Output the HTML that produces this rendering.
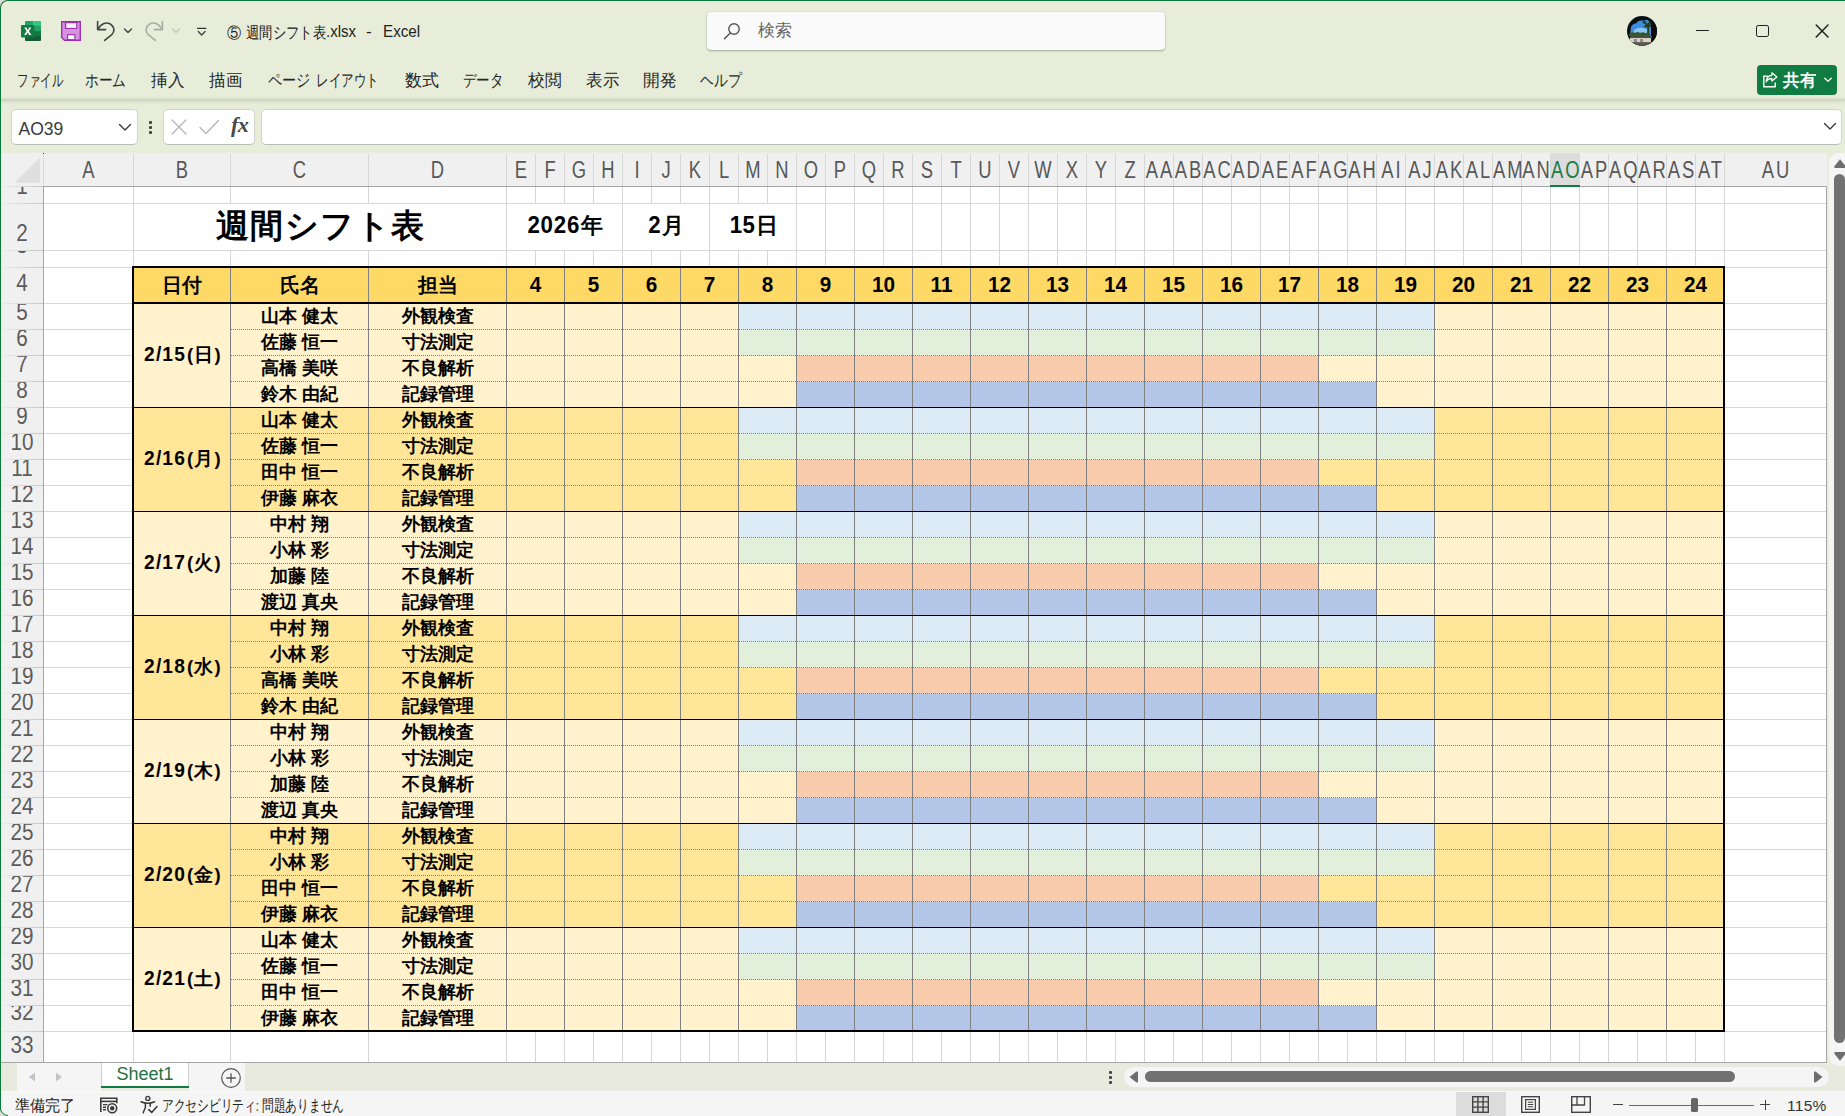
<!DOCTYPE html>
<html lang="ja"><head><meta charset="utf-8"><title>Excel</title>
<style>
html,body{margin:0;padding:0;}
body{width:1845px;height:1116px;overflow:hidden;position:relative;background:#e7edd9;font-family:"Liberation Sans",sans-serif;color:#222;}
div,span,svg{position:absolute;box-sizing:border-box;}
.t{white-space:nowrap;line-height:1;transform-origin:0 50%;}
.c{white-space:nowrap;line-height:1;text-align:center;}
.ch{white-space:nowrap;line-height:1;text-align:center;color:#585858;font-size:23px;top:159px;height:24px;transform:scaleX(.8);letter-spacing:2.5px;padding-left:2.5px;}
.rh{white-space:nowrap;line-height:1;text-align:center;color:#5c5c5c;font-size:23.5px;left:1px;width:42px;overflow:hidden;transform:scaleX(.88);}
.d{position:static;display:inline-block;font-size:1.09em;line-height:1;transform:scaleX(.95);}
.b{font-weight:bold;color:#000;white-space:nowrap;line-height:1;text-align:center;}
</style></head><body>
<div style="left:0px;top:0px;width:8px;height:8px;background:#d9ddd2;"></div>
<div style="left:0px;top:0px;width:1845px;height:1116px;background:#e7edd9;border-radius:8px 0 0 8px;"></div>
<div style="left:0px;top:0px;width:1845px;height:1116px;border-left:1px solid #0b7a3b;border-top:1px solid #0b7a3b;border-radius:8px 0 0 8px;"></div>
<svg style="left:21px;top:21px" width="20" height="20" viewBox="0 0 20 20">
<path d="M5 0h7.5v5H4V1a1 1 0 0 1 1-1z" fill="#21a366"/>
<path d="M12.5 0H19a1 1 0 0 1 1 1v4h-7.5z" fill="#33c481"/>
<rect x="4" y="5" width="8.5" height="5" fill="#107c41"/>
<rect x="12.5" y="5" width="7.5" height="5" fill="#21a366"/>
<rect x="4" y="10" width="8.5" height="5" fill="#185c37"/>
<rect x="12.5" y="10" width="7.5" height="5" fill="#107c41"/>
<path d="M4 15h16v4a1 1 0 0 1-1 1H5a1 1 0 0 1-1-1z" fill="#185c37"/>
<rect x="0" y="4" width="13.5" height="12.5" rx="1" fill="#107c41"/>
<path d="M3.3 6.6h2.2l1.3 2.6 1.4-2.6h2.1l-2.4 3.7 2.5 3.8H8.1l-1.4-2.7-1.5 2.7H3.1l2.5-3.8z" fill="#fff"/>
</svg>
<svg style="left:61px;top:21px" width="20" height="20" viewBox="0 0 20 20">
<path d="M0.700 0.700h18.600v18.600H3.500L0.700 16.500z" fill="#d592df" stroke="#9f2fb2" stroke-width="1.400"/>
<path d="M3.900 0.700v7.300h12.400V0.700z" fill="#9f2fb2"/>
<rect x="5.200" y="2.200" width="10" height="4.700" fill="#f6f0f8"/>
<path d="M6 19.300v-6.200h8.400v6.200z" fill="#9f2fb2"/>
<rect x="7.100" y="14.200" width="6.200" height="3.900" fill="#fbf8fc"/>
</svg>
<svg style="left:95px;top:19px" width="22" height="24" viewBox="0 0 22 24">
<path d="M2.6 2.6v8h8" fill="none" stroke="#444" stroke-width="1.6" stroke-linecap="round" stroke-linejoin="round"/>
<path d="M3.2 10 C6 4.5 11.5 2.6 15.6 5.2 C19.6 7.8 20 12.6 16.8 15.6 L9.6 21.4" fill="none" stroke="#444" stroke-width="1.6" stroke-linecap="round" stroke-linejoin="round"/>
</svg>
<svg style="left:123px;top:27px" width="10" height="8" viewBox="0 0 10 8"><path d="M1.5 2l3.5 3.5L8.5 2" fill="none" stroke="#444" stroke-width="1.4" stroke-linecap="round" stroke-linejoin="round"/></svg>
<svg style="left:143px;top:19px" width="22" height="24" viewBox="0 0 22 24">
<path d="M19.4 2.6v8h-8" fill="none" stroke="#a8aca0" stroke-width="1.6" stroke-linecap="round" stroke-linejoin="round"/>
<path d="M18.8 10 C16 4.5 10.5 2.6 6.4 5.2 C2.4 7.8 2 12.6 5.2 15.6 L12.4 21.4" fill="none" stroke="#a8aca0" stroke-width="1.6" stroke-linecap="round" stroke-linejoin="round"/>
</svg>
<svg style="left:171px;top:27px" width="10" height="8" viewBox="0 0 10 8"><path d="M1.5 2l3.5 3.5L8.5 2" fill="none" stroke="#c4c8bc" stroke-width="1.4" stroke-linecap="round" stroke-linejoin="round"/></svg>
<svg style="left:196px;top:26px" width="12" height="12" viewBox="0 0 12 12"><path d="M1.600 2.400h8.200" stroke="#333" stroke-width="1.400" stroke-linecap="round"/><path d="M2.300 5.600l3.400 3.300 3.400-3.300" fill="none" stroke="#444" stroke-width="1.4" stroke-linecap="round" stroke-linejoin="round"/></svg>
<span class="t" id="f1" style="left:226.8px;top:24.5px;font-size:15px;transform:scaleX(0.9467);color:#222;">⑤</span>
<span class="t" id="f2" style="left:246px;top:24.5px;font-size:15.5px;transform:scaleX(0.8333);color:#222;">週間シフト表</span>
<span class="t" id="f3" style="left:326px;top:24px;font-size:16px;transform:scaleX(0.9375);color:#222;">.xlsx</span>
<span class="t" id="f4" style="left:366.3px;top:24px;font-size:16px;transform:scaleX(1.0698);color:#222;">-</span>
<span class="t" id="f5" style="left:383.2px;top:24px;font-size:16px;transform:scaleX(0.9508);color:#222;">Excel</span>
<div style="left:707px;top:12px;width:458px;height:38px;background:#fafafa;border-radius:4px;box-shadow:0 1px 2px rgba(0,0,0,.28),0 0 0 1px rgba(0,0,0,.04);"></div>
<svg style="left:722px;top:21px" width="20" height="20" viewBox="0 0 20 20"><circle cx="12" cy="8" r="5.2" fill="none" stroke="#555" stroke-width="1.4"/><path d="M8.2 12L2.5 17.8" stroke="#555" stroke-width="1.5" stroke-linecap="round"/></svg>
<span class="t" id="f6" style="left:758px;top:22px;font-size:17px;transform:scaleX(1.0000);color:#666;">検索</span>
<svg style="left:1626px;top:15px" width="32" height="32" viewBox="0 0 32 32">
<defs><clipPath id="av"><circle cx="16" cy="16" r="15"/></clipPath></defs>
<g clip-path="url(#av)">
<rect width="32" height="32" fill="#0c1012"/>
<path d="M4 21 L5 12 Q7 8 10 8.500 Q12 5 16 5.500 L22 5 Q25 8 25 14 L25 21z" fill="#3a8ee0"/>
<path d="M7 21 L8 15 Q12 12 17 13 L23 15 L24 21z" fill="#8cc4f2"/>
<path d="M17 5 q3 1 4 4 q2 -3 5 -2 q-2 1 -2.500 3 q2 0 3 2 q-2 -.5 -3.500 .5 l.5 9 h-2.500 l.3 -9 q-2 -1 -4 .5 q.5 -2.500 2.500 -3 q-1.500 -2 -3.300 -2z" fill="#243d1c"/>
<path d="M3 19 q3 -3 6 -1 q3 -2 5 0 q3 -1.500 5 0 l5 0 v3 H3z" fill="#35582a"/>
<rect x="4" y="21" width="22" height="2" fill="#4a4f44"/>
<rect x="4" y="23" width="21" height="4.500" fill="#d6d2c6"/>
<rect x="8" y="24" width="3" height="3" fill="#7a8fa6"/><rect x="14" y="24" width="3" height="3" fill="#a08a70"/>
<path d="M2 27.500h24v4H2z" fill="#5a584c"/>
<path d="M25 3 h8 v28 h-7 q1 -10 -1 -18z" fill="#0a0d0c"/>
</g></svg>
<div style="left:1696px;top:29.5px;width:12.5px;height:1.5px;background:#1f1f1f;border-radius:.7px;"></div>
<div style="left:1755.5px;top:24.5px;width:13px;height:12.7px;border:1.500px solid #1f1f1f;border-radius:2.200px;"></div>
<svg style="left:1814px;top:23px" width="16" height="16" viewBox="0 0 16 16"><path d="M2.200 2l11.800 12M14 2L2.200 14" stroke="#1f1f1f" stroke-width="1.500" stroke-linecap="round"/></svg>
<span class="t" id="f7" style="left:16.5px;top:72px;font-size:17px;transform:scaleX(0.6765);color:#262626;">ファイル</span>
<span class="t" id="f8" style="left:85px;top:72px;font-size:17px;transform:scaleX(0.8039);color:#262626;">ホーム</span>
<span class="t" id="f9" style="left:151px;top:72px;font-size:17px;transform:scaleX(0.9706);color:#262626;">挿入</span>
<span class="t" id="f10" style="left:208.5px;top:72px;font-size:17px;transform:scaleX(0.9706);color:#262626;">描画</span>
<span class="t" id="f11" style="left:267.6px;top:72px;font-size:17px;transform:scaleX(0.8314);color:#262626;">ページ</span>
<span class="t" id="f12" style="left:316.4px;top:72px;font-size:17px;transform:scaleX(0.7365);color:#262626;">レイアウト</span>
<span class="t" id="f13" style="left:405px;top:72px;font-size:17px;transform:scaleX(1.0000);color:#262626;">数式</span>
<span class="t" id="f14" style="left:462.5px;top:72px;font-size:17px;transform:scaleX(0.7941);color:#262626;">データ</span>
<span class="t" id="f15" style="left:528px;top:72px;font-size:17px;transform:scaleX(0.9853);color:#262626;">校閲</span>
<span class="t" id="f16" style="left:585.5px;top:72px;font-size:17px;transform:scaleX(0.9706);color:#262626;">表示</span>
<span class="t" id="f17" style="left:642.5px;top:72px;font-size:17px;transform:scaleX(0.9853);color:#262626;">開発</span>
<span class="t" id="f18" style="left:699.5px;top:72px;font-size:17px;transform:scaleX(0.8137);color:#262626;">ヘルプ</span>
<div style="left:1px;top:96px;width:1844px;height:3px;background:linear-gradient(to bottom,rgba(0,0,0,0),rgba(0,0,0,.035));"></div>
<div style="left:1px;top:99px;width:1844px;height:6px;background:linear-gradient(to bottom,rgba(0,0,0,.13) 0%,rgba(0,0,0,.07) 30%,rgba(0,0,0,.02) 70%,rgba(0,0,0,0) 100%);"></div>
<div style="left:1757px;top:65px;width:80px;height:30px;background:#107c41;border-radius:4px;"></div>
<svg style="left:1761px;top:71px" width="18" height="18" viewBox="0 0 18 18"><path d="M6.800 5.200H2.800v10.600h11.400v-4.200" fill="none" stroke="#fff" stroke-width="1.400"/><path d="M10.900 1.800l5 4.100-5 4.100v-2.500c-3 0-4.600 1.100-5.700 3.200.2-3.600 2.100-6.100 5.700-6.400z" fill="none" stroke="#fff" stroke-width="1.300" stroke-linejoin="round"/></svg>
<span class="t" id="f19" style="left:1783px;top:72px;font-size:16.5px;transform:scaleX(0.9706);color:#fff;font-weight:bold;">共有</span>
<svg style="left:1823px;top:76px" width="10" height="8" viewBox="0 0 10 8"><path d="M1.8 2.200l3.200 3.200 3.200-3.200" fill="none" stroke="#fff" stroke-width="1.3" stroke-linecap="round" stroke-linejoin="round"/></svg>
<div style="left:11px;top:109px;width:127px;height:36px;background:#fff;border:1px solid #d2d5cc;border-bottom-color:#b9bbb5;border-radius:5px;"></div>
<span class="t" style="left:18.5px;top:121px;font-size:17.5px;color:#3a3a3a;">AO39</span>
<svg style="left:118px;top:122px" width="14" height="10" viewBox="0 0 14 10"><path d="M1.5 2.500l5.500 5.500 5.500-5.500" fill="none" stroke="#333" stroke-width="1.3" stroke-linecap="round" stroke-linejoin="round"/></svg>
<div style="left:148.5px;top:121px;width:3px;height:3px;background:#444;border-radius:1px;"></div>
<div style="left:148.5px;top:126px;width:3px;height:3px;background:#444;border-radius:1px;"></div>
<div style="left:148.5px;top:131px;width:3px;height:3px;background:#444;border-radius:1px;"></div>
<div style="left:163px;top:109px;width:92px;height:36px;background:#fff;border:1px solid #d2d5cc;border-bottom-color:#b9bbb5;border-radius:5px;"></div>
<svg style="left:170px;top:118px" width="18" height="18" viewBox="0 0 18 18"><path d="M2 2l14 14M16 2L2 16" stroke="#b4b4b4" stroke-width="1.3" stroke-linecap="round"/></svg>
<svg style="left:198px;top:118px" width="22" height="18" viewBox="0 0 22 18"><path d="M2 9.500l6 6L20.500 2.500" fill="none" stroke="#b4b4b4" stroke-width="1.3" stroke-linecap="round" stroke-linejoin="round"/></svg>
<span class="t" style="left:231px;top:114px;font-size:22px;color:#484848;font-family:'Liberation Serif',serif;font-style:italic;font-weight:bold;letter-spacing:-.5px;">fx</span>
<div style="left:260.5px;top:109px;width:1581.5px;height:36px;background:#fff;border:1px solid #d2d5cc;border-bottom-color:#b9bbb5;border-radius:5px;"></div>
<svg style="left:1823px;top:121px" width="14" height="10" viewBox="0 0 14 10"><path d="M1.5 2.500l5.500 5.500 5.500-5.500" fill="none" stroke="#333" stroke-width="1.3" stroke-linecap="round" stroke-linejoin="round"/></svg>
<div style="left:44px;top:187px;width:1783px;height:875px;background:#fff;"></div>
<div style="left:1px;top:153px;width:1826px;height:34px;background:#f0f0f0;"></div>
<div style="left:1px;top:187px;width:43px;height:875px;background:#f0f0f0;"></div>
<svg style="left:14px;top:157px" width="28" height="28" viewBox="0 0 28 28"><path d="M26 0.500V25.700H0.600z" fill="#dfdfdf"/></svg>
<div style="left:133px;top:187px;width:1px;height:875px;background:#d6d6d6;"></div>
<div style="left:230px;top:187px;width:1px;height:875px;background:#d6d6d6;"></div>
<div style="left:368px;top:187px;width:1px;height:875px;background:#d6d6d6;"></div>
<div style="left:506px;top:187px;width:1px;height:875px;background:#d6d6d6;"></div>
<div style="left:535px;top:187px;width:1px;height:875px;background:#d6d6d6;"></div>
<div style="left:564px;top:187px;width:1px;height:875px;background:#d6d6d6;"></div>
<div style="left:593px;top:187px;width:1px;height:875px;background:#d6d6d6;"></div>
<div style="left:622px;top:187px;width:1px;height:875px;background:#d6d6d6;"></div>
<div style="left:651px;top:187px;width:1px;height:875px;background:#d6d6d6;"></div>
<div style="left:680px;top:187px;width:1px;height:875px;background:#d6d6d6;"></div>
<div style="left:709px;top:187px;width:1px;height:875px;background:#d6d6d6;"></div>
<div style="left:738px;top:187px;width:1px;height:875px;background:#d6d6d6;"></div>
<div style="left:767px;top:187px;width:1px;height:875px;background:#d6d6d6;"></div>
<div style="left:796px;top:187px;width:1px;height:875px;background:#d6d6d6;"></div>
<div style="left:825px;top:187px;width:1px;height:875px;background:#d6d6d6;"></div>
<div style="left:854px;top:187px;width:1px;height:875px;background:#d6d6d6;"></div>
<div style="left:883px;top:187px;width:1px;height:875px;background:#d6d6d6;"></div>
<div style="left:912px;top:187px;width:1px;height:875px;background:#d6d6d6;"></div>
<div style="left:941px;top:187px;width:1px;height:875px;background:#d6d6d6;"></div>
<div style="left:970px;top:187px;width:1px;height:875px;background:#d6d6d6;"></div>
<div style="left:999px;top:187px;width:1px;height:875px;background:#d6d6d6;"></div>
<div style="left:1028px;top:187px;width:1px;height:875px;background:#d6d6d6;"></div>
<div style="left:1057px;top:187px;width:1px;height:875px;background:#d6d6d6;"></div>
<div style="left:1086px;top:187px;width:1px;height:875px;background:#d6d6d6;"></div>
<div style="left:1115px;top:187px;width:1px;height:875px;background:#d6d6d6;"></div>
<div style="left:1144px;top:187px;width:1px;height:875px;background:#d6d6d6;"></div>
<div style="left:1173px;top:187px;width:1px;height:875px;background:#d6d6d6;"></div>
<div style="left:1202px;top:187px;width:1px;height:875px;background:#d6d6d6;"></div>
<div style="left:1231px;top:187px;width:1px;height:875px;background:#d6d6d6;"></div>
<div style="left:1260px;top:187px;width:1px;height:875px;background:#d6d6d6;"></div>
<div style="left:1289px;top:187px;width:1px;height:875px;background:#d6d6d6;"></div>
<div style="left:1318px;top:187px;width:1px;height:875px;background:#d6d6d6;"></div>
<div style="left:1347px;top:187px;width:1px;height:875px;background:#d6d6d6;"></div>
<div style="left:1376px;top:187px;width:1px;height:875px;background:#d6d6d6;"></div>
<div style="left:1405px;top:187px;width:1px;height:875px;background:#d6d6d6;"></div>
<div style="left:1434px;top:187px;width:1px;height:875px;background:#d6d6d6;"></div>
<div style="left:1463px;top:187px;width:1px;height:875px;background:#d6d6d6;"></div>
<div style="left:1492px;top:187px;width:1px;height:875px;background:#d6d6d6;"></div>
<div style="left:1521px;top:187px;width:1px;height:875px;background:#d6d6d6;"></div>
<div style="left:1550px;top:187px;width:1px;height:875px;background:#d6d6d6;"></div>
<div style="left:1579px;top:187px;width:1px;height:875px;background:#d6d6d6;"></div>
<div style="left:1608px;top:187px;width:1px;height:875px;background:#d6d6d6;"></div>
<div style="left:1637px;top:187px;width:1px;height:875px;background:#d6d6d6;"></div>
<div style="left:1666px;top:187px;width:1px;height:875px;background:#d6d6d6;"></div>
<div style="left:1695px;top:187px;width:1px;height:875px;background:#d6d6d6;"></div>
<div style="left:1724px;top:187px;width:1px;height:875px;background:#d6d6d6;"></div>
<div style="left:1826px;top:187px;width:1px;height:875px;background:#d6d6d6;"></div>
<div style="left:44px;top:203px;width:1783px;height:1px;background:#d6d6d6;"></div>
<div style="left:44px;top:250px;width:1783px;height:1px;background:#d6d6d6;"></div>
<div style="left:44px;top:267px;width:1783px;height:1px;background:#d6d6d6;"></div>
<div style="left:44px;top:303px;width:1783px;height:1px;background:#d6d6d6;"></div>
<div style="left:44px;top:329px;width:1783px;height:1px;background:#d6d6d6;"></div>
<div style="left:44px;top:355px;width:1783px;height:1px;background:#d6d6d6;"></div>
<div style="left:44px;top:381px;width:1783px;height:1px;background:#d6d6d6;"></div>
<div style="left:44px;top:407px;width:1783px;height:1px;background:#d6d6d6;"></div>
<div style="left:44px;top:433px;width:1783px;height:1px;background:#d6d6d6;"></div>
<div style="left:44px;top:459px;width:1783px;height:1px;background:#d6d6d6;"></div>
<div style="left:44px;top:485px;width:1783px;height:1px;background:#d6d6d6;"></div>
<div style="left:44px;top:511px;width:1783px;height:1px;background:#d6d6d6;"></div>
<div style="left:44px;top:537px;width:1783px;height:1px;background:#d6d6d6;"></div>
<div style="left:44px;top:563px;width:1783px;height:1px;background:#d6d6d6;"></div>
<div style="left:44px;top:589px;width:1783px;height:1px;background:#d6d6d6;"></div>
<div style="left:44px;top:615px;width:1783px;height:1px;background:#d6d6d6;"></div>
<div style="left:44px;top:641px;width:1783px;height:1px;background:#d6d6d6;"></div>
<div style="left:44px;top:667px;width:1783px;height:1px;background:#d6d6d6;"></div>
<div style="left:44px;top:693px;width:1783px;height:1px;background:#d6d6d6;"></div>
<div style="left:44px;top:719px;width:1783px;height:1px;background:#d6d6d6;"></div>
<div style="left:44px;top:745px;width:1783px;height:1px;background:#d6d6d6;"></div>
<div style="left:44px;top:771px;width:1783px;height:1px;background:#d6d6d6;"></div>
<div style="left:44px;top:797px;width:1783px;height:1px;background:#d6d6d6;"></div>
<div style="left:44px;top:823px;width:1783px;height:1px;background:#d6d6d6;"></div>
<div style="left:44px;top:849px;width:1783px;height:1px;background:#d6d6d6;"></div>
<div style="left:44px;top:875px;width:1783px;height:1px;background:#d6d6d6;"></div>
<div style="left:44px;top:901px;width:1783px;height:1px;background:#d6d6d6;"></div>
<div style="left:44px;top:927px;width:1783px;height:1px;background:#d6d6d6;"></div>
<div style="left:44px;top:953px;width:1783px;height:1px;background:#d6d6d6;"></div>
<div style="left:44px;top:979px;width:1783px;height:1px;background:#d6d6d6;"></div>
<div style="left:44px;top:1005px;width:1783px;height:1px;background:#d6d6d6;"></div>
<div style="left:44px;top:1031px;width:1783px;height:1px;background:#d6d6d6;"></div>
<div style="left:134px;top:204px;width:372px;height:46px;background:#fff;"></div>
<div style="left:507px;top:204px;width:115px;height:46px;background:#fff;"></div>
<div style="left:623px;top:204px;width:86px;height:46px;background:#fff;"></div>
<div style="left:710px;top:204px;width:86px;height:46px;background:#fff;"></div>
<div style="left:133px;top:154px;width:1px;height:32px;background:#d8d8d8;"></div>
<div style="left:230px;top:154px;width:1px;height:32px;background:#d8d8d8;"></div>
<div style="left:368px;top:154px;width:1px;height:32px;background:#d8d8d8;"></div>
<div style="left:506px;top:154px;width:1px;height:32px;background:#d8d8d8;"></div>
<div style="left:535px;top:154px;width:1px;height:32px;background:#d8d8d8;"></div>
<div style="left:564px;top:154px;width:1px;height:32px;background:#d8d8d8;"></div>
<div style="left:593px;top:154px;width:1px;height:32px;background:#d8d8d8;"></div>
<div style="left:622px;top:154px;width:1px;height:32px;background:#d8d8d8;"></div>
<div style="left:651px;top:154px;width:1px;height:32px;background:#d8d8d8;"></div>
<div style="left:680px;top:154px;width:1px;height:32px;background:#d8d8d8;"></div>
<div style="left:709px;top:154px;width:1px;height:32px;background:#d8d8d8;"></div>
<div style="left:738px;top:154px;width:1px;height:32px;background:#d8d8d8;"></div>
<div style="left:767px;top:154px;width:1px;height:32px;background:#d8d8d8;"></div>
<div style="left:796px;top:154px;width:1px;height:32px;background:#d8d8d8;"></div>
<div style="left:825px;top:154px;width:1px;height:32px;background:#d8d8d8;"></div>
<div style="left:854px;top:154px;width:1px;height:32px;background:#d8d8d8;"></div>
<div style="left:883px;top:154px;width:1px;height:32px;background:#d8d8d8;"></div>
<div style="left:912px;top:154px;width:1px;height:32px;background:#d8d8d8;"></div>
<div style="left:941px;top:154px;width:1px;height:32px;background:#d8d8d8;"></div>
<div style="left:970px;top:154px;width:1px;height:32px;background:#d8d8d8;"></div>
<div style="left:999px;top:154px;width:1px;height:32px;background:#d8d8d8;"></div>
<div style="left:1028px;top:154px;width:1px;height:32px;background:#d8d8d8;"></div>
<div style="left:1057px;top:154px;width:1px;height:32px;background:#d8d8d8;"></div>
<div style="left:1086px;top:154px;width:1px;height:32px;background:#d8d8d8;"></div>
<div style="left:1115px;top:154px;width:1px;height:32px;background:#d8d8d8;"></div>
<div style="left:1144px;top:154px;width:1px;height:32px;background:#d8d8d8;"></div>
<div style="left:1173px;top:154px;width:1px;height:32px;background:#d8d8d8;"></div>
<div style="left:1202px;top:154px;width:1px;height:32px;background:#d8d8d8;"></div>
<div style="left:1231px;top:154px;width:1px;height:32px;background:#d8d8d8;"></div>
<div style="left:1260px;top:154px;width:1px;height:32px;background:#d8d8d8;"></div>
<div style="left:1289px;top:154px;width:1px;height:32px;background:#d8d8d8;"></div>
<div style="left:1318px;top:154px;width:1px;height:32px;background:#d8d8d8;"></div>
<div style="left:1347px;top:154px;width:1px;height:32px;background:#d8d8d8;"></div>
<div style="left:1376px;top:154px;width:1px;height:32px;background:#d8d8d8;"></div>
<div style="left:1405px;top:154px;width:1px;height:32px;background:#d8d8d8;"></div>
<div style="left:1434px;top:154px;width:1px;height:32px;background:#d8d8d8;"></div>
<div style="left:1463px;top:154px;width:1px;height:32px;background:#d8d8d8;"></div>
<div style="left:1492px;top:154px;width:1px;height:32px;background:#d8d8d8;"></div>
<div style="left:1521px;top:154px;width:1px;height:32px;background:#d8d8d8;"></div>
<div style="left:1550px;top:154px;width:1px;height:32px;background:#d8d8d8;"></div>
<div style="left:1579px;top:154px;width:1px;height:32px;background:#d8d8d8;"></div>
<div style="left:1608px;top:154px;width:1px;height:32px;background:#d8d8d8;"></div>
<div style="left:1637px;top:154px;width:1px;height:32px;background:#d8d8d8;"></div>
<div style="left:1666px;top:154px;width:1px;height:32px;background:#d8d8d8;"></div>
<div style="left:1695px;top:154px;width:1px;height:32px;background:#d8d8d8;"></div>
<div style="left:1724px;top:154px;width:1px;height:32px;background:#d8d8d8;"></div>
<span class="ch" style="left:38px;width:101px;">A</span>
<span class="ch" style="left:128px;width:108px;">B</span>
<span class="ch" style="left:225px;width:149px;">C</span>
<span class="ch" style="left:363px;width:149px;">D</span>
<span class="ch" style="left:501px;width:40px;">E</span>
<span class="ch" style="left:530px;width:40px;">F</span>
<span class="ch" style="left:559px;width:40px;">G</span>
<span class="ch" style="left:588px;width:40px;">H</span>
<span class="ch" style="left:617px;width:40px;">I</span>
<span class="ch" style="left:646px;width:40px;">J</span>
<span class="ch" style="left:675px;width:40px;">K</span>
<span class="ch" style="left:704px;width:40px;">L</span>
<span class="ch" style="left:733px;width:40px;">M</span>
<span class="ch" style="left:762px;width:40px;">N</span>
<span class="ch" style="left:791px;width:40px;">O</span>
<span class="ch" style="left:820px;width:40px;">P</span>
<span class="ch" style="left:849px;width:40px;">Q</span>
<span class="ch" style="left:878px;width:40px;">R</span>
<span class="ch" style="left:907px;width:40px;">S</span>
<span class="ch" style="left:936px;width:40px;">T</span>
<span class="ch" style="left:965px;width:40px;">U</span>
<span class="ch" style="left:994px;width:40px;">V</span>
<span class="ch" style="left:1023px;width:40px;">W</span>
<span class="ch" style="left:1052px;width:40px;">X</span>
<span class="ch" style="left:1081px;width:40px;">Y</span>
<span class="ch" style="left:1110px;width:40px;">Z</span>
<span class="ch" style="left:1139px;width:40px;">AA</span>
<span class="ch" style="left:1168px;width:40px;">AB</span>
<span class="ch" style="left:1197px;width:40px;">AC</span>
<span class="ch" style="left:1226px;width:40px;">AD</span>
<span class="ch" style="left:1255px;width:40px;">AE</span>
<span class="ch" style="left:1284px;width:40px;">AF</span>
<span class="ch" style="left:1313px;width:40px;">AG</span>
<span class="ch" style="left:1342px;width:40px;">AH</span>
<span class="ch" style="left:1371px;width:40px;">AI</span>
<span class="ch" style="left:1400px;width:40px;">AJ</span>
<span class="ch" style="left:1429px;width:40px;">AK</span>
<span class="ch" style="left:1458px;width:40px;">AL</span>
<span class="ch" style="left:1487px;width:40px;">AM</span>
<span class="ch" style="left:1516px;width:40px;">AN</span>
<div style="left:1551px;top:153px;width:28px;height:33px;background:#dcdcdc;"></div>
<div style="left:1551px;top:185px;width:29px;height:2px;background:#107c41;"></div>
<span class="ch" style="left:1545px;width:40px;color:#1d7a46;">AO</span>
<span class="ch" style="left:1574px;width:40px;">AP</span>
<span class="ch" style="left:1603px;width:40px;">AQ</span>
<span class="ch" style="left:1632px;width:40px;">AR</span>
<span class="ch" style="left:1661px;width:40px;">AS</span>
<span class="ch" style="left:1690px;width:40px;">AT</span>
<span class="ch" style="left:1719px;width:113px;">AU</span>
<div style="left:43px;top:186px;width:1784px;height:1px;background:#a6a6a6;"></div>
<div style="left:1px;top:186px;width:42px;height:1px;background:linear-gradient(to right,rgba(205,205,205,.1),rgba(190,190,190,.9));"></div>
<div style="left:43px;top:155px;width:1px;height:31px;background:#dadada;"></div>
<div style="left:43px;top:153px;width:1px;height:1px;background:#222;"></div>
<div style="left:1826px;top:186px;width:1px;height:877px;background:#a6a6a6;"></div>
<div style="left:43px;top:187px;width:1px;height:875px;background:#a6a6a6;"></div>
<div style="left:1px;top:1062px;width:1826px;height:1px;background:#a6a6a6;"></div>
<div style="left:1550px;top:185px;width:30px;height:2px;background:#107c41;"></div>
<div style="left:1px;top:187px;width:42px;height:17px;overflow:hidden;"><span class="rh" style="left:0;top:-12px;">1</span></div>
<div style="left:1px;top:204px;width:42px;height:47px;overflow:hidden;"><span class="rh" style="left:0;top:17.5px;">2</span></div>
<div style="left:1px;top:251px;width:42px;height:16px;overflow:hidden;"><span class="rh" style="left:0;top:-17px;">3</span></div>
<div style="left:1px;top:268px;width:42px;height:36px;overflow:hidden;"><span class="rh" style="left:0;top:4px;">4</span></div>
<div style="left:1px;top:304px;width:42px;height:26px;overflow:hidden;"><span class="rh" style="left:0;top:-3px;">5</span></div>
<div style="left:1px;top:330px;width:42px;height:26px;overflow:hidden;"><span class="rh" style="left:0;top:-3px;">6</span></div>
<div style="left:1px;top:356px;width:42px;height:26px;overflow:hidden;"><span class="rh" style="left:0;top:-3px;">7</span></div>
<div style="left:1px;top:382px;width:42px;height:26px;overflow:hidden;"><span class="rh" style="left:0;top:-3px;">8</span></div>
<div style="left:1px;top:408px;width:42px;height:26px;overflow:hidden;"><span class="rh" style="left:0;top:-3px;">9</span></div>
<div style="left:1px;top:434px;width:42px;height:26px;overflow:hidden;"><span class="rh" style="left:0;top:-3px;">10</span></div>
<div style="left:1px;top:460px;width:42px;height:26px;overflow:hidden;"><span class="rh" style="left:0;top:-3px;">11</span></div>
<div style="left:1px;top:486px;width:42px;height:26px;overflow:hidden;"><span class="rh" style="left:0;top:-3px;">12</span></div>
<div style="left:1px;top:512px;width:42px;height:26px;overflow:hidden;"><span class="rh" style="left:0;top:-3px;">13</span></div>
<div style="left:1px;top:538px;width:42px;height:26px;overflow:hidden;"><span class="rh" style="left:0;top:-3px;">14</span></div>
<div style="left:1px;top:564px;width:42px;height:26px;overflow:hidden;"><span class="rh" style="left:0;top:-3px;">15</span></div>
<div style="left:1px;top:590px;width:42px;height:26px;overflow:hidden;"><span class="rh" style="left:0;top:-3px;">16</span></div>
<div style="left:1px;top:616px;width:42px;height:26px;overflow:hidden;"><span class="rh" style="left:0;top:-3px;">17</span></div>
<div style="left:1px;top:642px;width:42px;height:26px;overflow:hidden;"><span class="rh" style="left:0;top:-3px;">18</span></div>
<div style="left:1px;top:668px;width:42px;height:26px;overflow:hidden;"><span class="rh" style="left:0;top:-3px;">19</span></div>
<div style="left:1px;top:694px;width:42px;height:26px;overflow:hidden;"><span class="rh" style="left:0;top:-3px;">20</span></div>
<div style="left:1px;top:720px;width:42px;height:26px;overflow:hidden;"><span class="rh" style="left:0;top:-3px;">21</span></div>
<div style="left:1px;top:746px;width:42px;height:26px;overflow:hidden;"><span class="rh" style="left:0;top:-3px;">22</span></div>
<div style="left:1px;top:772px;width:42px;height:26px;overflow:hidden;"><span class="rh" style="left:0;top:-3px;">23</span></div>
<div style="left:1px;top:798px;width:42px;height:26px;overflow:hidden;"><span class="rh" style="left:0;top:-3px;">24</span></div>
<div style="left:1px;top:824px;width:42px;height:26px;overflow:hidden;"><span class="rh" style="left:0;top:-3px;">25</span></div>
<div style="left:1px;top:850px;width:42px;height:26px;overflow:hidden;"><span class="rh" style="left:0;top:-3px;">26</span></div>
<div style="left:1px;top:876px;width:42px;height:26px;overflow:hidden;"><span class="rh" style="left:0;top:-3px;">27</span></div>
<div style="left:1px;top:902px;width:42px;height:26px;overflow:hidden;"><span class="rh" style="left:0;top:-3px;">28</span></div>
<div style="left:1px;top:928px;width:42px;height:26px;overflow:hidden;"><span class="rh" style="left:0;top:-3px;">29</span></div>
<div style="left:1px;top:954px;width:42px;height:26px;overflow:hidden;"><span class="rh" style="left:0;top:-3px;">30</span></div>
<div style="left:1px;top:980px;width:42px;height:26px;overflow:hidden;"><span class="rh" style="left:0;top:-3px;">31</span></div>
<div style="left:1px;top:1006px;width:42px;height:26px;overflow:hidden;"><span class="rh" style="left:0;top:-5px;">32</span></div>
<div style="left:1px;top:1032px;width:42px;height:30px;overflow:hidden;"><span class="rh" style="left:0;top:2px;">33</span></div>
<div style="left:1px;top:203px;width:42px;height:1px;background:linear-gradient(to right,rgba(205,205,205,.15),rgba(195,195,195,.95));"></div>
<div style="left:1px;top:250px;width:42px;height:1px;background:linear-gradient(to right,rgba(205,205,205,.15),rgba(195,195,195,.95));"></div>
<div style="left:1px;top:267px;width:42px;height:1px;background:linear-gradient(to right,rgba(205,205,205,.15),rgba(195,195,195,.95));"></div>
<div style="left:1px;top:303px;width:42px;height:1px;background:linear-gradient(to right,rgba(205,205,205,.15),rgba(195,195,195,.95));"></div>
<div style="left:1px;top:329px;width:42px;height:1px;background:linear-gradient(to right,rgba(205,205,205,.15),rgba(195,195,195,.95));"></div>
<div style="left:1px;top:355px;width:42px;height:1px;background:linear-gradient(to right,rgba(205,205,205,.15),rgba(195,195,195,.95));"></div>
<div style="left:1px;top:381px;width:42px;height:1px;background:linear-gradient(to right,rgba(205,205,205,.15),rgba(195,195,195,.95));"></div>
<div style="left:1px;top:407px;width:42px;height:1px;background:linear-gradient(to right,rgba(205,205,205,.15),rgba(195,195,195,.95));"></div>
<div style="left:1px;top:433px;width:42px;height:1px;background:linear-gradient(to right,rgba(205,205,205,.15),rgba(195,195,195,.95));"></div>
<div style="left:1px;top:459px;width:42px;height:1px;background:linear-gradient(to right,rgba(205,205,205,.15),rgba(195,195,195,.95));"></div>
<div style="left:1px;top:485px;width:42px;height:1px;background:linear-gradient(to right,rgba(205,205,205,.15),rgba(195,195,195,.95));"></div>
<div style="left:1px;top:511px;width:42px;height:1px;background:linear-gradient(to right,rgba(205,205,205,.15),rgba(195,195,195,.95));"></div>
<div style="left:1px;top:537px;width:42px;height:1px;background:linear-gradient(to right,rgba(205,205,205,.15),rgba(195,195,195,.95));"></div>
<div style="left:1px;top:563px;width:42px;height:1px;background:linear-gradient(to right,rgba(205,205,205,.15),rgba(195,195,195,.95));"></div>
<div style="left:1px;top:589px;width:42px;height:1px;background:linear-gradient(to right,rgba(205,205,205,.15),rgba(195,195,195,.95));"></div>
<div style="left:1px;top:615px;width:42px;height:1px;background:linear-gradient(to right,rgba(205,205,205,.15),rgba(195,195,195,.95));"></div>
<div style="left:1px;top:641px;width:42px;height:1px;background:linear-gradient(to right,rgba(205,205,205,.15),rgba(195,195,195,.95));"></div>
<div style="left:1px;top:667px;width:42px;height:1px;background:linear-gradient(to right,rgba(205,205,205,.15),rgba(195,195,195,.95));"></div>
<div style="left:1px;top:693px;width:42px;height:1px;background:linear-gradient(to right,rgba(205,205,205,.15),rgba(195,195,195,.95));"></div>
<div style="left:1px;top:719px;width:42px;height:1px;background:linear-gradient(to right,rgba(205,205,205,.15),rgba(195,195,195,.95));"></div>
<div style="left:1px;top:745px;width:42px;height:1px;background:linear-gradient(to right,rgba(205,205,205,.15),rgba(195,195,195,.95));"></div>
<div style="left:1px;top:771px;width:42px;height:1px;background:linear-gradient(to right,rgba(205,205,205,.15),rgba(195,195,195,.95));"></div>
<div style="left:1px;top:797px;width:42px;height:1px;background:linear-gradient(to right,rgba(205,205,205,.15),rgba(195,195,195,.95));"></div>
<div style="left:1px;top:823px;width:42px;height:1px;background:linear-gradient(to right,rgba(205,205,205,.15),rgba(195,195,195,.95));"></div>
<div style="left:1px;top:849px;width:42px;height:1px;background:linear-gradient(to right,rgba(205,205,205,.15),rgba(195,195,195,.95));"></div>
<div style="left:1px;top:875px;width:42px;height:1px;background:linear-gradient(to right,rgba(205,205,205,.15),rgba(195,195,195,.95));"></div>
<div style="left:1px;top:901px;width:42px;height:1px;background:linear-gradient(to right,rgba(205,205,205,.15),rgba(195,195,195,.95));"></div>
<div style="left:1px;top:927px;width:42px;height:1px;background:linear-gradient(to right,rgba(205,205,205,.15),rgba(195,195,195,.95));"></div>
<div style="left:1px;top:953px;width:42px;height:1px;background:linear-gradient(to right,rgba(205,205,205,.15),rgba(195,195,195,.95));"></div>
<div style="left:1px;top:979px;width:42px;height:1px;background:linear-gradient(to right,rgba(205,205,205,.15),rgba(195,195,195,.95));"></div>
<div style="left:1px;top:1005px;width:42px;height:1px;background:linear-gradient(to right,rgba(205,205,205,.15),rgba(195,195,195,.95));"></div>
<div style="left:1px;top:1031px;width:42px;height:1px;background:linear-gradient(to right,rgba(205,205,205,.15),rgba(195,195,195,.95));"></div>
<div style="left:134px;top:268px;width:1590px;height:35px;background:#ffd966;"></div>
<div style="left:134px;top:304px;width:1590px;height:104px;background:#fff2cc;"></div>
<div style="left:739px;top:304px;width:696px;height:26px;background:#ddebf7;"></div>
<div style="left:739px;top:330px;width:696px;height:26px;background:#e2efda;"></div>
<div style="left:797px;top:356px;width:522px;height:26px;background:#f8cbad;"></div>
<div style="left:797px;top:382px;width:580px;height:26px;background:#b4c6e7;"></div>
<div style="left:231px;top:329px;width:1493px;height:1px;background-image:repeating-linear-gradient(to right,#808080 0 1px,transparent 1px 2px);"></div>
<div style="left:231px;top:355px;width:1493px;height:1px;background-image:repeating-linear-gradient(to right,#808080 0 1px,transparent 1px 2px);"></div>
<div style="left:231px;top:381px;width:1493px;height:1px;background-image:repeating-linear-gradient(to right,#808080 0 1px,transparent 1px 2px);"></div>
<div style="left:134px;top:408px;width:1590px;height:104px;background:#ffe699;"></div>
<div style="left:739px;top:408px;width:696px;height:26px;background:#ddebf7;"></div>
<div style="left:739px;top:434px;width:696px;height:26px;background:#e2efda;"></div>
<div style="left:797px;top:460px;width:522px;height:26px;background:#f8cbad;"></div>
<div style="left:797px;top:486px;width:580px;height:26px;background:#b4c6e7;"></div>
<div style="left:231px;top:433px;width:1493px;height:1px;background-image:repeating-linear-gradient(to right,#808080 0 1px,transparent 1px 2px);"></div>
<div style="left:231px;top:459px;width:1493px;height:1px;background-image:repeating-linear-gradient(to right,#808080 0 1px,transparent 1px 2px);"></div>
<div style="left:231px;top:485px;width:1493px;height:1px;background-image:repeating-linear-gradient(to right,#808080 0 1px,transparent 1px 2px);"></div>
<div style="left:134px;top:512px;width:1590px;height:104px;background:#fff2cc;"></div>
<div style="left:739px;top:512px;width:696px;height:26px;background:#ddebf7;"></div>
<div style="left:739px;top:538px;width:696px;height:26px;background:#e2efda;"></div>
<div style="left:797px;top:564px;width:522px;height:26px;background:#f8cbad;"></div>
<div style="left:797px;top:590px;width:580px;height:26px;background:#b4c6e7;"></div>
<div style="left:231px;top:537px;width:1493px;height:1px;background-image:repeating-linear-gradient(to right,#808080 0 1px,transparent 1px 2px);"></div>
<div style="left:231px;top:563px;width:1493px;height:1px;background-image:repeating-linear-gradient(to right,#808080 0 1px,transparent 1px 2px);"></div>
<div style="left:231px;top:589px;width:1493px;height:1px;background-image:repeating-linear-gradient(to right,#808080 0 1px,transparent 1px 2px);"></div>
<div style="left:134px;top:616px;width:1590px;height:104px;background:#ffe699;"></div>
<div style="left:739px;top:616px;width:696px;height:26px;background:#ddebf7;"></div>
<div style="left:739px;top:642px;width:696px;height:26px;background:#e2efda;"></div>
<div style="left:797px;top:668px;width:522px;height:26px;background:#f8cbad;"></div>
<div style="left:797px;top:694px;width:580px;height:26px;background:#b4c6e7;"></div>
<div style="left:231px;top:641px;width:1493px;height:1px;background-image:repeating-linear-gradient(to right,#808080 0 1px,transparent 1px 2px);"></div>
<div style="left:231px;top:667px;width:1493px;height:1px;background-image:repeating-linear-gradient(to right,#808080 0 1px,transparent 1px 2px);"></div>
<div style="left:231px;top:693px;width:1493px;height:1px;background-image:repeating-linear-gradient(to right,#808080 0 1px,transparent 1px 2px);"></div>
<div style="left:134px;top:720px;width:1590px;height:104px;background:#fff2cc;"></div>
<div style="left:739px;top:720px;width:696px;height:26px;background:#ddebf7;"></div>
<div style="left:739px;top:746px;width:696px;height:26px;background:#e2efda;"></div>
<div style="left:797px;top:772px;width:522px;height:26px;background:#f8cbad;"></div>
<div style="left:797px;top:798px;width:580px;height:26px;background:#b4c6e7;"></div>
<div style="left:231px;top:745px;width:1493px;height:1px;background-image:repeating-linear-gradient(to right,#808080 0 1px,transparent 1px 2px);"></div>
<div style="left:231px;top:771px;width:1493px;height:1px;background-image:repeating-linear-gradient(to right,#808080 0 1px,transparent 1px 2px);"></div>
<div style="left:231px;top:797px;width:1493px;height:1px;background-image:repeating-linear-gradient(to right,#808080 0 1px,transparent 1px 2px);"></div>
<div style="left:134px;top:824px;width:1590px;height:104px;background:#ffe699;"></div>
<div style="left:739px;top:824px;width:696px;height:26px;background:#ddebf7;"></div>
<div style="left:739px;top:850px;width:696px;height:26px;background:#e2efda;"></div>
<div style="left:797px;top:876px;width:522px;height:26px;background:#f8cbad;"></div>
<div style="left:797px;top:902px;width:580px;height:26px;background:#b4c6e7;"></div>
<div style="left:231px;top:849px;width:1493px;height:1px;background-image:repeating-linear-gradient(to right,#808080 0 1px,transparent 1px 2px);"></div>
<div style="left:231px;top:875px;width:1493px;height:1px;background-image:repeating-linear-gradient(to right,#808080 0 1px,transparent 1px 2px);"></div>
<div style="left:231px;top:901px;width:1493px;height:1px;background-image:repeating-linear-gradient(to right,#808080 0 1px,transparent 1px 2px);"></div>
<div style="left:134px;top:928px;width:1590px;height:104px;background:#fff2cc;"></div>
<div style="left:739px;top:928px;width:696px;height:26px;background:#ddebf7;"></div>
<div style="left:739px;top:954px;width:696px;height:26px;background:#e2efda;"></div>
<div style="left:797px;top:980px;width:522px;height:26px;background:#f8cbad;"></div>
<div style="left:797px;top:1006px;width:580px;height:26px;background:#b4c6e7;"></div>
<div style="left:231px;top:953px;width:1493px;height:1px;background-image:repeating-linear-gradient(to right,#808080 0 1px,transparent 1px 2px);"></div>
<div style="left:231px;top:979px;width:1493px;height:1px;background-image:repeating-linear-gradient(to right,#808080 0 1px,transparent 1px 2px);"></div>
<div style="left:231px;top:1005px;width:1493px;height:1px;background-image:repeating-linear-gradient(to right,#808080 0 1px,transparent 1px 2px);"></div>
<div style="left:230px;top:268px;width:1px;height:762px;background:#808080;"></div>
<div style="left:368px;top:268px;width:1px;height:762px;background:#808080;"></div>
<div style="left:506px;top:268px;width:1px;height:762px;background:#808080;"></div>
<div style="left:564px;top:268px;width:1px;height:762px;background:#808080;"></div>
<div style="left:622px;top:268px;width:1px;height:762px;background:#808080;"></div>
<div style="left:680px;top:268px;width:1px;height:762px;background:#808080;"></div>
<div style="left:738px;top:268px;width:1px;height:762px;background:#808080;"></div>
<div style="left:796px;top:268px;width:1px;height:762px;background:#808080;"></div>
<div style="left:854px;top:268px;width:1px;height:762px;background:#808080;"></div>
<div style="left:912px;top:268px;width:1px;height:762px;background:#808080;"></div>
<div style="left:970px;top:268px;width:1px;height:762px;background:#808080;"></div>
<div style="left:1028px;top:268px;width:1px;height:762px;background:#808080;"></div>
<div style="left:1086px;top:268px;width:1px;height:762px;background:#808080;"></div>
<div style="left:1144px;top:268px;width:1px;height:762px;background:#808080;"></div>
<div style="left:1202px;top:268px;width:1px;height:762px;background:#808080;"></div>
<div style="left:1260px;top:268px;width:1px;height:762px;background:#808080;"></div>
<div style="left:1318px;top:268px;width:1px;height:762px;background:#808080;"></div>
<div style="left:1376px;top:268px;width:1px;height:762px;background:#808080;"></div>
<div style="left:1434px;top:268px;width:1px;height:762px;background:#808080;"></div>
<div style="left:1492px;top:268px;width:1px;height:762px;background:#808080;"></div>
<div style="left:1550px;top:268px;width:1px;height:762px;background:#808080;"></div>
<div style="left:1608px;top:268px;width:1px;height:762px;background:#808080;"></div>
<div style="left:1666px;top:268px;width:1px;height:762px;background:#808080;"></div>
<div style="left:134px;top:407px;width:1590px;height:1px;background:#000;"></div>
<div style="left:134px;top:511px;width:1590px;height:1px;background:#000;"></div>
<div style="left:134px;top:615px;width:1590px;height:1px;background:#000;"></div>
<div style="left:134px;top:719px;width:1590px;height:1px;background:#000;"></div>
<div style="left:134px;top:823px;width:1590px;height:1px;background:#000;"></div>
<div style="left:134px;top:927px;width:1590px;height:1px;background:#000;"></div>
<div style="left:132px;top:266px;width:1593px;height:2px;background:#000;"></div>
<div style="left:132px;top:302px;width:1593px;height:2px;background:#000;"></div>
<div style="left:132px;top:1030px;width:1593px;height:2px;background:#000;"></div>
<div style="left:132px;top:266px;width:2px;height:766px;background:#000;"></div>
<div style="left:1723px;top:266px;width:2px;height:766px;background:#000;"></div>
<span class="b" style="left:134px;width:373px;top:205.5px;height:40px;line-height:40px;font-size:33px;letter-spacing:1.5px;">週間シフト表</span>
<span class="b" style="left:507px;width:116px;top:213.0px;height:26px;line-height:26px;font-size:21.5px;letter-spacing:.9px;"><span class="d">2026</span>年</span>
<span class="b" style="left:623px;width:87px;top:213.0px;height:26px;line-height:26px;font-size:21.5px;letter-spacing:.5px;"><span class="d">2</span>月</span>
<span class="b" style="left:710px;width:87px;top:213.0px;height:26px;line-height:26px;font-size:21.5px;letter-spacing:.5px;"><span class="d">15</span>日</span>
<span class="b" style="left:134px;width:96px;top:273.0px;height:24px;line-height:24px;font-size:20px;">日付</span>
<span class="b" style="left:231px;width:137px;top:273.0px;height:24px;line-height:24px;font-size:20px;">氏名</span>
<span class="b" style="left:369px;width:137px;top:273.0px;height:24px;line-height:24px;font-size:20px;">担当</span>
<span class="b" style="left:507px;width:57px;top:270.5px;height:27px;line-height:27px;font-size:22.5px;transform:scaleX(.92);">4</span>
<span class="b" style="left:565px;width:57px;top:270.5px;height:27px;line-height:27px;font-size:22.5px;transform:scaleX(.92);">5</span>
<span class="b" style="left:623px;width:57px;top:270.5px;height:27px;line-height:27px;font-size:22.5px;transform:scaleX(.92);">6</span>
<span class="b" style="left:681px;width:57px;top:270.5px;height:27px;line-height:27px;font-size:22.5px;transform:scaleX(.92);">7</span>
<span class="b" style="left:739px;width:57px;top:270.5px;height:27px;line-height:27px;font-size:22.5px;transform:scaleX(.92);">8</span>
<span class="b" style="left:797px;width:57px;top:270.5px;height:27px;line-height:27px;font-size:22.5px;transform:scaleX(.92);">9</span>
<span class="b" style="left:855px;width:57px;top:270.5px;height:27px;line-height:27px;font-size:22.5px;transform:scaleX(.92);">10</span>
<span class="b" style="left:913px;width:57px;top:270.5px;height:27px;line-height:27px;font-size:22.5px;transform:scaleX(.92);">11</span>
<span class="b" style="left:971px;width:57px;top:270.5px;height:27px;line-height:27px;font-size:22.5px;transform:scaleX(.92);">12</span>
<span class="b" style="left:1029px;width:57px;top:270.5px;height:27px;line-height:27px;font-size:22.5px;transform:scaleX(.92);">13</span>
<span class="b" style="left:1087px;width:57px;top:270.5px;height:27px;line-height:27px;font-size:22.5px;transform:scaleX(.92);">14</span>
<span class="b" style="left:1145px;width:57px;top:270.5px;height:27px;line-height:27px;font-size:22.5px;transform:scaleX(.92);">15</span>
<span class="b" style="left:1203px;width:57px;top:270.5px;height:27px;line-height:27px;font-size:22.5px;transform:scaleX(.92);">16</span>
<span class="b" style="left:1261px;width:57px;top:270.5px;height:27px;line-height:27px;font-size:22.5px;transform:scaleX(.92);">17</span>
<span class="b" style="left:1319px;width:57px;top:270.5px;height:27px;line-height:27px;font-size:22.5px;transform:scaleX(.92);">18</span>
<span class="b" style="left:1377px;width:57px;top:270.5px;height:27px;line-height:27px;font-size:22.5px;transform:scaleX(.92);">19</span>
<span class="b" style="left:1435px;width:57px;top:270.5px;height:27px;line-height:27px;font-size:22.5px;transform:scaleX(.92);">20</span>
<span class="b" style="left:1493px;width:57px;top:270.5px;height:27px;line-height:27px;font-size:22.5px;transform:scaleX(.92);">21</span>
<span class="b" style="left:1551px;width:57px;top:270.5px;height:27px;line-height:27px;font-size:22.5px;transform:scaleX(.92);">22</span>
<span class="b" style="left:1609px;width:57px;top:270.5px;height:27px;line-height:27px;font-size:22.5px;transform:scaleX(.92);">23</span>
<span class="b" style="left:1667px;width:57px;top:270.5px;height:27px;line-height:27px;font-size:22.5px;transform:scaleX(.92);">24</span>
<span class="b" style="left:134px;width:97px;top:343.5px;height:22px;line-height:22px;font-size:18.5px;letter-spacing:1.2px;"><span class="d">2/15</span>(日)</span>
<span class="b" style="left:231px;width:137px;top:305.0px;height:22px;line-height:22px;font-size:18.3px;">山本 健太</span>
<span class="b" style="left:369px;width:137px;top:305.0px;height:22px;line-height:22px;font-size:18.3px;">外観検査</span>
<span class="b" style="left:231px;width:137px;top:331.0px;height:22px;line-height:22px;font-size:18.3px;">佐藤 恒一</span>
<span class="b" style="left:369px;width:137px;top:331.0px;height:22px;line-height:22px;font-size:18.3px;">寸法測定</span>
<span class="b" style="left:231px;width:137px;top:357.0px;height:22px;line-height:22px;font-size:18.3px;">高橋 美咲</span>
<span class="b" style="left:369px;width:137px;top:357.0px;height:22px;line-height:22px;font-size:18.3px;">不良解析</span>
<span class="b" style="left:231px;width:137px;top:383.0px;height:22px;line-height:22px;font-size:18.3px;">鈴木 由紀</span>
<span class="b" style="left:369px;width:137px;top:383.0px;height:22px;line-height:22px;font-size:18.3px;">記録管理</span>
<span class="b" style="left:134px;width:97px;top:447.5px;height:22px;line-height:22px;font-size:18.5px;letter-spacing:1.2px;"><span class="d">2/16</span>(月)</span>
<span class="b" style="left:231px;width:137px;top:409.0px;height:22px;line-height:22px;font-size:18.3px;">山本 健太</span>
<span class="b" style="left:369px;width:137px;top:409.0px;height:22px;line-height:22px;font-size:18.3px;">外観検査</span>
<span class="b" style="left:231px;width:137px;top:435.0px;height:22px;line-height:22px;font-size:18.3px;">佐藤 恒一</span>
<span class="b" style="left:369px;width:137px;top:435.0px;height:22px;line-height:22px;font-size:18.3px;">寸法測定</span>
<span class="b" style="left:231px;width:137px;top:461.0px;height:22px;line-height:22px;font-size:18.3px;">田中 恒一</span>
<span class="b" style="left:369px;width:137px;top:461.0px;height:22px;line-height:22px;font-size:18.3px;">不良解析</span>
<span class="b" style="left:231px;width:137px;top:487.0px;height:22px;line-height:22px;font-size:18.3px;">伊藤 麻衣</span>
<span class="b" style="left:369px;width:137px;top:487.0px;height:22px;line-height:22px;font-size:18.3px;">記録管理</span>
<span class="b" style="left:134px;width:97px;top:551.5px;height:22px;line-height:22px;font-size:18.5px;letter-spacing:1.2px;"><span class="d">2/17</span>(火)</span>
<span class="b" style="left:231px;width:137px;top:513.0px;height:22px;line-height:22px;font-size:18.3px;">中村 翔</span>
<span class="b" style="left:369px;width:137px;top:513.0px;height:22px;line-height:22px;font-size:18.3px;">外観検査</span>
<span class="b" style="left:231px;width:137px;top:539.0px;height:22px;line-height:22px;font-size:18.3px;">小林 彩</span>
<span class="b" style="left:369px;width:137px;top:539.0px;height:22px;line-height:22px;font-size:18.3px;">寸法測定</span>
<span class="b" style="left:231px;width:137px;top:565.0px;height:22px;line-height:22px;font-size:18.3px;">加藤 陸</span>
<span class="b" style="left:369px;width:137px;top:565.0px;height:22px;line-height:22px;font-size:18.3px;">不良解析</span>
<span class="b" style="left:231px;width:137px;top:591.0px;height:22px;line-height:22px;font-size:18.3px;">渡辺 真央</span>
<span class="b" style="left:369px;width:137px;top:591.0px;height:22px;line-height:22px;font-size:18.3px;">記録管理</span>
<span class="b" style="left:134px;width:97px;top:655.5px;height:22px;line-height:22px;font-size:18.5px;letter-spacing:1.2px;"><span class="d">2/18</span>(水)</span>
<span class="b" style="left:231px;width:137px;top:617.0px;height:22px;line-height:22px;font-size:18.3px;">中村 翔</span>
<span class="b" style="left:369px;width:137px;top:617.0px;height:22px;line-height:22px;font-size:18.3px;">外観検査</span>
<span class="b" style="left:231px;width:137px;top:643.0px;height:22px;line-height:22px;font-size:18.3px;">小林 彩</span>
<span class="b" style="left:369px;width:137px;top:643.0px;height:22px;line-height:22px;font-size:18.3px;">寸法測定</span>
<span class="b" style="left:231px;width:137px;top:669.0px;height:22px;line-height:22px;font-size:18.3px;">高橋 美咲</span>
<span class="b" style="left:369px;width:137px;top:669.0px;height:22px;line-height:22px;font-size:18.3px;">不良解析</span>
<span class="b" style="left:231px;width:137px;top:695.0px;height:22px;line-height:22px;font-size:18.3px;">鈴木 由紀</span>
<span class="b" style="left:369px;width:137px;top:695.0px;height:22px;line-height:22px;font-size:18.3px;">記録管理</span>
<span class="b" style="left:134px;width:97px;top:759.5px;height:22px;line-height:22px;font-size:18.5px;letter-spacing:1.2px;"><span class="d">2/19</span>(木)</span>
<span class="b" style="left:231px;width:137px;top:721.0px;height:22px;line-height:22px;font-size:18.3px;">中村 翔</span>
<span class="b" style="left:369px;width:137px;top:721.0px;height:22px;line-height:22px;font-size:18.3px;">外観検査</span>
<span class="b" style="left:231px;width:137px;top:747.0px;height:22px;line-height:22px;font-size:18.3px;">小林 彩</span>
<span class="b" style="left:369px;width:137px;top:747.0px;height:22px;line-height:22px;font-size:18.3px;">寸法測定</span>
<span class="b" style="left:231px;width:137px;top:773.0px;height:22px;line-height:22px;font-size:18.3px;">加藤 陸</span>
<span class="b" style="left:369px;width:137px;top:773.0px;height:22px;line-height:22px;font-size:18.3px;">不良解析</span>
<span class="b" style="left:231px;width:137px;top:799.0px;height:22px;line-height:22px;font-size:18.3px;">渡辺 真央</span>
<span class="b" style="left:369px;width:137px;top:799.0px;height:22px;line-height:22px;font-size:18.3px;">記録管理</span>
<span class="b" style="left:134px;width:97px;top:863.5px;height:22px;line-height:22px;font-size:18.5px;letter-spacing:1.2px;"><span class="d">2/20</span>(金)</span>
<span class="b" style="left:231px;width:137px;top:825.0px;height:22px;line-height:22px;font-size:18.3px;">中村 翔</span>
<span class="b" style="left:369px;width:137px;top:825.0px;height:22px;line-height:22px;font-size:18.3px;">外観検査</span>
<span class="b" style="left:231px;width:137px;top:851.0px;height:22px;line-height:22px;font-size:18.3px;">小林 彩</span>
<span class="b" style="left:369px;width:137px;top:851.0px;height:22px;line-height:22px;font-size:18.3px;">寸法測定</span>
<span class="b" style="left:231px;width:137px;top:877.0px;height:22px;line-height:22px;font-size:18.3px;">田中 恒一</span>
<span class="b" style="left:369px;width:137px;top:877.0px;height:22px;line-height:22px;font-size:18.3px;">不良解析</span>
<span class="b" style="left:231px;width:137px;top:903.0px;height:22px;line-height:22px;font-size:18.3px;">伊藤 麻衣</span>
<span class="b" style="left:369px;width:137px;top:903.0px;height:22px;line-height:22px;font-size:18.3px;">記録管理</span>
<span class="b" style="left:134px;width:97px;top:967.5px;height:22px;line-height:22px;font-size:18.5px;letter-spacing:1.2px;"><span class="d">2/21</span>(土)</span>
<span class="b" style="left:231px;width:137px;top:929.0px;height:22px;line-height:22px;font-size:18.3px;">山本 健太</span>
<span class="b" style="left:369px;width:137px;top:929.0px;height:22px;line-height:22px;font-size:18.3px;">外観検査</span>
<span class="b" style="left:231px;width:137px;top:955.0px;height:22px;line-height:22px;font-size:18.3px;">佐藤 恒一</span>
<span class="b" style="left:369px;width:137px;top:955.0px;height:22px;line-height:22px;font-size:18.3px;">寸法測定</span>
<span class="b" style="left:231px;width:137px;top:981.0px;height:22px;line-height:22px;font-size:18.3px;">田中 恒一</span>
<span class="b" style="left:369px;width:137px;top:981.0px;height:22px;line-height:22px;font-size:18.3px;">不良解析</span>
<span class="b" style="left:231px;width:137px;top:1007.0px;height:22px;line-height:22px;font-size:18.3px;">伊藤 麻衣</span>
<span class="b" style="left:369px;width:137px;top:1007.0px;height:22px;line-height:22px;font-size:18.3px;">記録管理</span>
<div style="left:1px;top:1063px;width:1844px;height:28px;background:#e7eadc;"></div>
<div style="left:17px;top:1063px;width:228px;height:28px;background:#f5f5f5;"></div>
<div style="left:1829px;top:153px;width:24px;height:912.5px;background:#f5f5f5;border-radius:9px;"></div>
<svg style="left:1833px;top:158px" width="14" height="11" viewBox="0 0 14 11"><path d="M7 1.200L12.600 8.300a1 1 0 0 1-.8 1.600H2.200a1 1 0 0 1-.8-1.600z" fill="#6e6e6e"/></svg>
<div style="left:1834px;top:174px;width:11px;height:868.5px;background:#727272;border-radius:5.500px;"></div>
<svg style="left:1833px;top:1050.500px" width="14" height="11" viewBox="0 0 14 11"><path d="M7 9.800L12.600 2.700a1 1 0 0 0-.8-1.600H2.200a1 1 0 0 0-.8 1.600z" fill="#6e6e6e"/></svg>
<svg style="left:27px;top:1071px" width="10" height="12" viewBox="0 0 10 12"><path d="M8 1.500v9L2 6z" fill="#c4c4c4"/></svg>
<svg style="left:54px;top:1071px" width="10" height="12" viewBox="0 0 10 12"><path d="M2 1.500v9L8 6z" fill="#c4c4c4"/></svg>
<div style="left:101px;top:1063px;width:88px;height:25px;background:#fff;border-left:1px solid #cfcfcf;border-right:1px solid #cfcfcf;"></div>
<div style="left:101px;top:1086px;width:88px;height:2px;background:#107c41;"></div>
<div style="left:101px;top:1088px;width:88px;height:3px;background:#e9ebde;"></div>
<span class="c" style="left:101px;width:88px;top:1065px;font-size:18px;color:#1e7145;">Sheet1</span>
<svg style="left:220px;top:1067px" width="22" height="22" viewBox="0 0 22 22"><circle cx="11" cy="11" r="9.300" fill="none" stroke="#555" stroke-width="1.200"/><path d="M11 6.200v9.600M6.200 11h9.600" stroke="#555" stroke-width="1.300"/></svg>
<div style="left:1108.5px;top:1071px;width:3px;height:3px;background:#444;border-radius:1px;"></div>
<div style="left:1108.5px;top:1076px;width:3px;height:3px;background:#444;border-radius:1px;"></div>
<div style="left:1108.5px;top:1081px;width:3px;height:3px;background:#444;border-radius:1px;"></div>
<div style="left:1124px;top:1066.5px;width:705px;height:20.5px;background:#f5f5f5;border-radius:10px;"></div>
<svg style="left:1128px;top:1070px" width="11" height="14" viewBox="0 0 11 14"><path d="M1.500 7L8.400 1.600a1 1 0 0 1 1.600.8v9.200a1 1 0 0 1-1.600.8z" fill="#6e6e6e"/></svg>
<svg style="left:1813px;top:1070px" width="11" height="14" viewBox="0 0 11 14"><path d="M9.500 7L2.600 1.600a1 1 0 0 0-1.600.8v9.200a1 1 0 0 0 1.600.8z" fill="#6e6e6e"/></svg>
<div style="left:1145px;top:1071px;width:590px;height:11px;background:#727272;border-radius:5.500px;"></div>
<div style="left:1px;top:1091px;width:1844px;height:25px;background:#f5f5f5;"></div>
<div style="left:1px;top:1091px;width:1844px;height:1px;background:#fafafa;"></div>
<span class="t" id="f20" style="left:15px;top:1098px;font-size:15.5px;transform:scaleX(0.9453);color:#222;">準備完了</span>
<svg style="left:99px;top:1096px" width="20" height="18" viewBox="0 0 20 18"><path d="M1.800 16V2.200h16v5" fill="none" stroke="#3a3a3a" stroke-width="1.600"/><path d="M1.800 5.400h16" stroke="#3a3a3a" stroke-width="1.600"/><path d="M4 8.600h4.500M4 11.200h3M4 13.800h3" stroke="#3a3a3a" stroke-width="1.400"/><circle cx="13.200" cy="12.200" r="4.500" fill="none" stroke="#3a3a3a" stroke-width="1.600"/><circle cx="13.200" cy="12.200" r="2.200" fill="#3a3a3a"/></svg>
<svg style="left:139px;top:1095px" width="20" height="20" viewBox="0 0 20 20"><circle cx="8.800" cy="3.400" r="2" fill="none" stroke="#3a3a3a" stroke-width="1.400"/><path d="M2 6.800c2.600 1.200 4.600 1.500 6.800 1.500s4.200-.3 6.800-1.500" fill="none" stroke="#3a3a3a" stroke-width="1.500" stroke-linecap="round"/><path d="M6.400 8.500v3.400c0 1.500-1.400 3.200-2.200 5.800M11.200 8.500v2.800" fill="none" stroke="#3a3a3a" stroke-width="1.500" stroke-linecap="round"/><path d="M9.800 14.600l2.900 2.900 5.300-6" fill="none" stroke="#3a3a3a" stroke-width="1.600" stroke-linecap="round" stroke-linejoin="round"/></svg>
<span class="t" id="f21" style="left:162px;top:1098px;font-size:15.5px;transform:scaleX(0.7320);color:#222;">アクセシビリティ: 問題ありません</span>
<div style="left:1456px;top:1092px;width:50px;height:24px;background:#dcdcdc;"></div>
<svg style="left:1472px;top:1096px" width="17" height="17" viewBox="0 0 17 17"><rect x="0.700" y="0.700" width="15.600" height="15.600" fill="none" stroke="#444" stroke-width="1.400"/><path d="M5.900 0.700v15.600M11.100 0.700v15.600M0.700 5.900h15.600M0.700 11.100h15.600" stroke="#444" stroke-width="1.400"/></svg>
<svg style="left:1521px;top:1096px" width="19" height="17" viewBox="0 0 19 17"><rect x="0.700" y="0.700" width="17.600" height="15.600" fill="none" stroke="#444" stroke-width="1.400"/><rect x="4.600" y="3.600" width="9.800" height="9.800" fill="none" stroke="#444" stroke-width="1.200"/><path d="M6.800 6.300h5.400M6.800 8.500h5.400M6.800 10.700h5.400" stroke="#444" stroke-width="1.100"/></svg>
<svg style="left:1571px;top:1096px" width="20" height="17" viewBox="0 0 20 17"><rect x="0.700" y="0.700" width="18.600" height="15.600" fill="none" stroke="#444" stroke-width="1.400"/><path d="M6 0.700v8.300h7.500V0.700M0.700 9h5.300" fill="none" stroke="#444" stroke-width="1.300"/></svg>
<div style="left:1613px;top:1104px;width:10px;height:1px;background:#444;"></div>
<div style="left:1629px;top:1104.5px;width:125px;height:1px;background:#6a6a6a;"></div>
<div style="left:1691px;top:1098px;width:7px;height:14px;background:#666;border-radius:1.500px;"></div>
<div style="left:1760px;top:1104px;width:10px;height:1px;background:#444;"></div>
<div style="left:1764.5px;top:1099.5px;width:1px;height:10px;background:#444;"></div>
<span class="t" style="left:1787px;top:1097.500px;font-size:15.500px;color:#333;letter-spacing:.3px;">115%</span>
<svg style="left:0;top:1108px" width="8" height="8" viewBox="0 0 8 8"><path d="M0 8h8A8 8 0 0 1 0 0z" fill="#d9ddd2"/><path d="M0.500 0A7.500 7.500 0 0 0 8 7.500" fill="none" stroke="#0b7a3b" stroke-width="1"/></svg>
</body></html>
